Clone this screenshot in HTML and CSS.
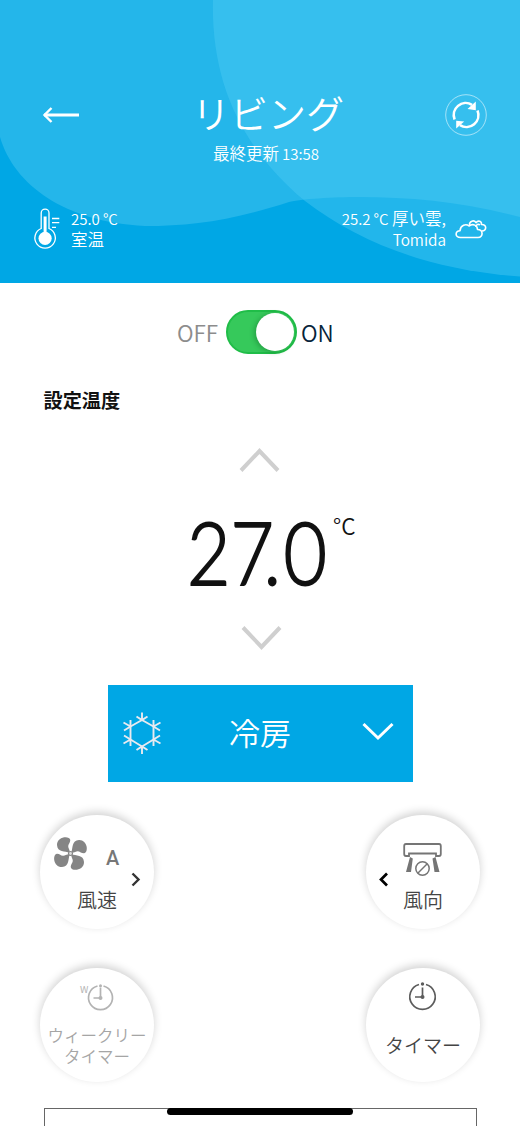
FILE: index.html
```html
<!DOCTYPE html>
<html lang="ja">
<head>
<meta charset="utf-8">
<title>リビング</title>
<link rel="stylesheet" href="styles.css">
</head>
<body>
<main class="screen">
  <header class="header">
    <svg class="waves" viewBox="0 0 520 283" preserveAspectRatio="none">
      <path fill="#24b6ea" d="M0 0H520V217C465 202 410 197 360 197C333 197 300 199 289 202C230 221 190 226 145 226C65 222 14 185 0 137Z"/>
      <path fill="#4dcbf3" fill-opacity=".44" d="M213 0H520V276.500C430 270 360 243 305 201C240 147 211 80 213 0Z"/>
    </svg>
    <div class="topbar">
      <svg class="back" viewBox="0 0 38 18" fill="none" stroke="#fff"><path stroke-width="2.8" d="M2 9H37"/><path stroke-width="2.4" d="M9.500 2L2.500 9L9.500 16"/></svg>
      <h1 class="title">リビング</h1>
      <div class="refresh">
        <svg viewBox="0 0 42 42" fill="none" stroke="#fff">
          <circle cx="21" cy="21" r="20.300" stroke-width="1" stroke-opacity=".55"/>
          <path stroke-width="2.600" d="M9.600 25.500A12 12 0 0 1 27 10.800M32.500 16.500A12 12 0 0 1 15 31.200"/>
          <path fill="#fff" stroke="none" d="M30.800 7.500V16.300L22.500 15ZM11.200 34.500V26.700L19.200 27.500Z"/>
        </svg>
      </div>
    </div>
    <p class="updated">最終更新 <span class="latin">13:58</span></p>
    <div class="climate">
      <svg class="thermo" viewBox="0 0 26 42" fill="none" stroke="#fff">
        <path stroke-width="1.300" d="M7.200 20.500V5A3.900 3.900 0 0 1 15 5V20.500A10.200 10.200 0 1 1 7.200 20.500Z"/>
        <path stroke-width="3" d="M11.100 8.500V26"/><circle cx="11.100" cy="30.300" r="6.600" fill="#fff" stroke="none"/>
        <path stroke-width="1.300" d="M18 10.500H25.300M18 14.700H25.300M18 19.300H22"/>
      </svg>
      <div class="reading"><span class="latin">25.0 °C</span><br>室温</div>
      <div class="reading outdoor"><span class="latin">25.2 °C</span> 厚い雲,<br><span class="place">Tomida</span></div>
      <svg class="cloud" viewBox="0 0 32 20" fill="none" stroke="#fff" stroke-width="1.600" stroke-linejoin="round">
        <path d="M5.500 18.500C-.5 18.500 0 12 5 11.700C5.500 6 11 4.500 14 7C18 4 22.500 6.500 22.500 10.500C28.500 10.500 28.500 18.500 23 18.500Z"/>
        <path d="M14.500 6.500C14 1.800 19 .5 21 3.700C23 .9 26.800 2 26.500 5.500C32 5.200 32 11.500 26.800 12"/><path d="M21 8C21 5.500 23.500 4.800 25 6"/>
      </svg>
    </div>
  </header>

  <div class="power">
    <span class="off">OFF</span><span class="switch"><i class="knob"></i></span><span class="on">ON</span>
  </div>
  <h2 class="caption">設定温度</h2>

  <section class="setpoint">
    <svg class="up" viewBox="0 0 42 26" fill="none" stroke="#cfcfcf" stroke-width="4"><path d="M2 23.500L20.500 4L39 23.500"/></svg>
    <div class="value"><span class="number">2<span class="seven">7</span><span class="point">.</span>0</span><span class="unit">°C</span></div>
    <svg class="down" viewBox="0 0 42 26" fill="none" stroke="#cfcfcf" stroke-width="4"><path d="M2 2.500L20.500 22L39 2.500"/></svg>
  </section>

  <button class="mode">
    <svg class="snow" viewBox="0 0 38 42" fill="none" stroke="#e8eaf0" stroke-width="1.900">
      <path d="M19 8L30.500 14.500V27.500L19 34.500L7.500 27.500V14.500Z"/>
      <path d="M19 .5V8M13.500 4.500L19 8L24.500 4.500M19 42V34.500M13.500 38L19 34.500L24.500 38M.5 10.500L7.500 14.500M7.500 8V14.500L1 18.500M37.500 10.500L30.500 14.500M30.500 8V14.500L37 18.500M.5 31.500L7.500 27.500M7.500 34V27.500L1 23.500M37.500 31.500L30.500 27.500M30.500 34V27.500L37 23.500"/>
    </svg>
    <span>冷房</span>
    <svg class="chev" viewBox="0 0 32 20" fill="none" stroke="#fff" stroke-width="3"><path d="M1.500 2L16 16L30.500 2"/></svg>
  </button>

  <section class="controls">
    <div class="dial">
      <svg viewBox="0 0 114 70">
        <g transform="translate(30.500 38.500)" fill="#858585">
          <path id="blade" d="M-.8 -.8C-.5 -4-2.500 -5.500-2.300 -7.500C-2 -10-.3 -10.500-.2 -13.500C-1 -18.500-13.800 -17-13.500 -8.500C-13 -1-5.500 -2.500-.8 -.8Z"/>
          <use href="#blade" transform="rotate(90)"/><use href="#blade" transform="rotate(180)"/><use href="#blade" transform="rotate(270)"/>
          <circle r="2" fill="#ddd" stroke="#858585" stroke-width="1.200"/>
        </g>
        <path d="M92.500 58.500L98.500 64.500L92.500 70.500" fill="none" stroke="#333" stroke-width="2.400"/>
      </svg>
      <b class="auto">A</b>
      <span class="label">風速</span>
    </div>
    <div class="dial">
      <svg viewBox="0 0 114 70" fill="none" stroke="#757575">
        <path stroke-width="1.800" d="M43 41H40Q38.200 41 38.200 39V31Q38.200 29 40 29H73Q74.800 29 74.800 31V39Q74.800 41 73 41H70V38.500H43Z"/>
        <path fill="#757575" stroke="none" d="M44 42L46.800 43.500L45 57H40ZM69.500 42L66.500 43.500L68.500 57H73.500Z"/>
        <circle cx="56.500" cy="53.500" r="6.700" stroke-width="1.500"/><path stroke-width="1.400" d="M52 58L61 49"/>
        <path stroke="#000" stroke-width="2.700" d="M21 58.500L15 64.500L21 70.500"/>
      </svg>
      <span class="label">風向</span>
    </div>
    <div class="dial weekly">
      <svg viewBox="0 0 114 70" fill="none" stroke="#b3b3b3" stroke-width="1.700">
        <path d="M57.500 18A12 12 0 1 0 63.500 18M60.500 19.500V30H53.500"/><circle cx="60.500" cy="17.700" r="1.500" fill="#b3b3b3" stroke="none"/><circle cx="60.500" cy="30" r="2" fill="#b3b3b3" stroke="none"/>
      </svg>
      <span class="w">W</span>
      <span class="label">ウィークリー<br>タイマー</span>
    </div>
    <div class="dial timer">
      <svg viewBox="0 0 114 70" fill="none" stroke="#5c5c5c" stroke-width="1.700">
        <path d="M53 16.500A12.700 12.700 0 1 0 60 16.500M56.500 19.500V29H49"/><circle cx="56.500" cy="16" r="1.700" fill="#5c5c5c" stroke="none"/><circle cx="56.500" cy="29" r="2" fill="#5c5c5c" stroke="none"/>
      </svg>
      <span class="label">タイマー</span>
    </div>
  </section>

  <div class="panel"></div>
  <div class="home-bar"></div>
</main>
</body>
</html>
```

FILE: styles.css
```css
* { box-sizing: border-box; margin: 0; padding: 0; }
body { background: #fff; overflow: hidden; font-family: "Noto Sans CJK JP", "Liberation Sans", sans-serif; }
svg { display: block; overflow: visible; }
.screen { position: relative; width: 520px; height: 1126px; overflow: hidden; display: flex; flex-direction: column; }

.header { position: relative; height: 283px; padding: 94px 33px 0; background: #00a7e5; color: #fff; flex: none; font-weight: 350; }
.waves { position: absolute; left: 0; top: 0; width: 520px; height: 283px; }
.topbar { position: relative; display: grid; grid-template-columns: 42px 1fr 42px; height: 42px; align-items: center; }
.back { width: 38px; height: 18px; margin-left: 9px; }
.title { font-size: 38px; font-weight: 350; line-height: 42px; text-align: center; padding-left: 16px; white-space: nowrap; margin-top: -6px; }
.refresh { width: 42px; height: 42px; }
.updated { position: relative; font-size: 16.500px; line-height: 24px; margin-top: 5px; padding-left: 12px; text-align: center; word-spacing: -.5px; }
.latin { font-size: 15px; }
.place { font-size: 15.300px; }
.climate { position: relative; display: flex; align-items: flex-start; margin-top: 42px; }
.thermo { width: 26px; height: 42px; margin-left: 1px; }
.reading { font-size: 16.500px; line-height: 21px; margin-left: 11px; word-spacing: -.2px; }
.outdoor { margin-left: auto; text-align: right; }
.cloud { width: 32px; height: 20px; margin: 11px 0 0 9px; }

.power { display: flex; align-items: center; height: 44px; margin: 27px 0 0 177px; font-size: 22.500px; line-height: 44px; flex: none; font-weight: 350; }
.off { width: 49px; color: #8c8c8c; }
.on { margin-left: 4px; color: #06233a; }
.switch { width: 71px; height: 44px; border-radius: 22px; background: #36c95b; border: 2px solid #20bd48; padding: 1px; display: flex; justify-content: flex-end; }
.knob { width: 38px; height: 38px; border-radius: 50%; background: #fff; box-shadow: -2px 1px 5px rgba(0, 70, 20, .3); }
.caption { font-size: 19.200px; line-height: 28px; margin: 32px 0 0 43.500px; color: #111; flex: none; }

.setpoint { display: flex; flex-direction: column; height: 204px; margin-top: 33px; flex: none; }
.up { width: 42px; height: 26px; margin-left: 239px; }
.value { display: flex; height: 152px; padding-left: 187px; color: #111; }
.number { width: 146px; font-family: Lato, sans-serif; font-weight: 300; font-size: 87px; line-height: 158px; transform: scaleX(.86); transform-origin: 0 50%; white-space: nowrap; -webkit-text-stroke: 1.900px #111; }
.seven { letter-spacing: -12px; }
.point { letter-spacing: 3px; }
.unit { font-size: 22.500px; line-height: 28px; padding-top: 38px; font-weight: 350; }
.down { width: 42px; height: 26px; margin-left: 241px; }

.mode { width: 305px; height: 97px; margin: 34px 0 0 108px; padding: 0 19px 0 15px; border: 0; background: #00a7e5; color: #fff; font: 350 31px/44px "Noto Sans CJK JP", sans-serif; display: flex; align-items: center; justify-content: space-between; flex: none; }
.mode span { margin: -4px 3px 0 0; }
.snow { width: 38px; height: 42px; margin-top: -2px; }
.chev { width: 32px; height: 20px; margin-top: -3px; }

.controls { display: grid; grid-template-columns: 114px 114px; column-gap: 212px; row-gap: 39px; margin: 33px 0 0 40px; flex: none; }
.dial { position: relative; width: 114px; height: 114px; border-radius: 50%; background: #fff; box-shadow: 0 -3px 9px rgba(0, 0, 0, .18); display: flex; flex-direction: column; align-items: center; color: #444; }
.dial svg { width: 114px; height: 70px; flex: none; }
.label { font-size: 20px; line-height: 28px; margin-top: 1px; font-weight: 350; text-align: center; white-space: nowrap; }
.auto { position: absolute; left: 66px; top: 30px; font: 500 20px/26px Roboto, sans-serif; color: #777; }
.weekly .label { font-size: 16.500px; line-height: 20.500px; margin-top: -13px; color: #a5a5a5; }
.w { position: absolute; left: 40px; top: 14px; font-size: 9.500px; line-height: 14px; color: #b3b3b3; }
.timer .label { font-size: 19px; margin-top: -7px; }

.panel { width: 433px; height: 40px; margin: 26px 0 0 44px; border: 1px solid #666; flex: none; }
.home-bar { position: absolute; left: 167px; top: 1108px; width: 186px; height: 7px; border-radius: 4px; background: #000; }
```
